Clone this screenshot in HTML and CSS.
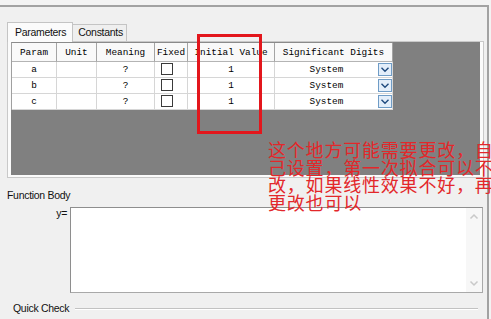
FILE: index.html
```html
<!DOCTYPE html>
<html>
<head>
<meta charset="utf-8">
<link rel="stylesheet" href="styles.css">
</head>
<body>
<div class="frame">
  <div class="tabs">
    <div class="tab active">Parameters</div>
    <div class="tab">Constants</div>
  </div>
  <div class="page">
    <div class="grid">
      <div class="table">
        <div class="cell head">Param</div>
        <div class="cell head">Unit</div>
        <div class="cell head">Meaning</div>
        <div class="cell head">Fixed</div>
        <div class="cell head">Initial Value</div>
        <div class="cell head">Significant Digits</div>

        <div class="cell">a</div>
        <div class="cell"></div>
        <div class="cell">?</div>
        <div class="cell fixed"><span class="check"></span></div>
        <div class="cell">1</div>
        <div class="cell sig"><span class="sig-text">System</span><span class="drop"><svg width="14" height="13" viewBox="0 0 14 13"><polyline points="3.5,4.8 7,8.3 10.5,4.8" fill="none" stroke="#1f4a7e" stroke-width="1.4"/></svg></span></div>

        <div class="cell">b</div>
        <div class="cell"></div>
        <div class="cell">?</div>
        <div class="cell fixed"><span class="check"></span></div>
        <div class="cell">1</div>
        <div class="cell sig"><span class="sig-text">System</span><span class="drop"><svg width="14" height="13" viewBox="0 0 14 13"><polyline points="3.5,4.8 7,8.3 10.5,4.8" fill="none" stroke="#1f4a7e" stroke-width="1.4"/></svg></span></div>

        <div class="cell">c</div>
        <div class="cell"></div>
        <div class="cell">?</div>
        <div class="cell fixed"><span class="check"></span></div>
        <div class="cell">1</div>
        <div class="cell sig"><span class="sig-text">System</span><span class="drop"><svg width="14" height="13" viewBox="0 0 14 13"><polyline points="3.5,4.8 7,8.3 10.5,4.8" fill="none" stroke="#1f4a7e" stroke-width="1.4"/></svg></span></div>
      </div>
    </div>
  </div>

  <div class="label fb">Function Body</div>
  <div class="fn-row">
    <div class="yeq">y=</div>
    <div class="textbox">
      <div class="scroll">
        <svg width="16" height="16" viewBox="0 0 16 16"><polyline points="4.5,9.5 8,6 11.5,9.5" fill="none" stroke="#c9c9c9" stroke-width="1.5"/></svg>
        <svg width="16" height="16" viewBox="0 0 16 16"><polyline points="4.5,6.5 8,10 11.5,6.5" fill="none" stroke="#c9c9c9" stroke-width="1.5"/></svg>
      </div>
    </div>
  </div>
  <div class="qc">
    <span class="label">Quick Check</span>
    <div class="rule"></div>
  </div>
</div>

<div class="mark"></div>
<div class="note">
  <div>这个地方可能需要更改，自</div>
  <div>己设置，第一次拟合可以不</div>
  <div>改，如果线性效果不好，再</div>
  <div>更改也可以</div>
</div>
</body>
</html>
```

FILE: styles.css
```css
html, body {
  margin: 0;
  padding: 0;
}
body {
  width: 491px;
  height: 319px;
  overflow: hidden;
  background: #f3f3f3;
  position: relative;
  font-family: "Liberation Sans", Arial, sans-serif;
  font-size: 10.5px;
  letter-spacing: -0.3px;
  color: #111;
}
.frame {
  box-sizing: border-box;
  margin-top: 5px;
  width: 489px;
  height: 314px;
  border-top: 2px solid #a2a2a2;
  border-right: 2px solid #a2a2a2;
  background: #f0f0f0;
  padding-left: 7px;
}
.tabs {
  display: flex;
  align-items: flex-end;
  margin-top: 15px;
  height: 19px;
}
.tab {
  box-sizing: border-box;
  height: 17px;
  line-height: 15px;
  padding: 0 3px 0 5px;
  border: 1px solid #c4c4c4;
  border-bottom: none;
  border-left: none;
  background: #efefef;
}
.tab.active {
  height: 20px;
  line-height: 18px;
  padding: 0 6px 0 7px;
  margin-bottom: -1px;
  border-left: 1px solid #c4c4c4;
  background: #fbfbfb;
  position: relative;
  z-index: 1;
}
.page {
  box-sizing: border-box;
  width: 477px;
  border: 1px solid #c9c9c9;
  background: #fbfbfb;
  padding: 0 3px 2px 4px;
}
.grid {
  height: 133px;
  background: #808080;
  margin-left: -1px;
}
.table {
  display: grid;
  grid-template-columns: 45px 40px 58px 33px 87px 118px;
  grid-template-rows: 19px 16px 16px 16px;
  width: max-content;
  border-left: 1px solid #a0a0a0;
  border-top: 1px solid #8a8a8a;
  font-family: "Liberation Mono", "Courier New", monospace;
  font-size: 9.4px;
  letter-spacing: 0;
  color: #000;
}
.cell {
  box-sizing: border-box;
  background: #fff;
  border-right: 1px solid #d6d6d6;
  border-bottom: 1px solid #d6d6d6;
  display: flex;
  align-items: center;
  justify-content: center;
}
.cell.head {
  background: #f9f9f9;
  border-right: 1px solid #a4a4a4;
  border-bottom: 1px solid #b4b4b4;
}
.cell.fixed {
  justify-content: flex-start;
  padding-left: 6px;
}
.check {
  box-sizing: border-box;
  width: 12px;
  height: 12px;
  border: 1px solid #3a3a3a;
  background: #fff;
  margin-top: -1px;
}
.cell.sig {
  justify-content: space-between;
  padding-right: 0;
}
.sig-text {
  flex: 1;
  text-align: center;
}
.drop {
  box-sizing: border-box;
  width: 14px;
  height: 13px;
  border: 1px solid #6f9cc6;
  background: #e3eefa;
  display: flex;
}
.drop svg {
  margin: -1px;
}
.label {
  line-height: 13px;
}
.fb {
  margin-top: 11px;
  margin-left: 0;
}
.fn-row {
  display: grid;
  grid-template-columns: 60px 413px;
  column-gap: 3px;
  margin-top: 5px;
}
.yeq {
  text-align: right;
  line-height: 12px;
  font-style: italic;
  font-style: normal;
}
.textbox {
  box-sizing: border-box;
  height: 86px;
  border: 1px solid #8e8e8e;
  border-right-color: #a9a9a9;
  border-bottom-color: #a9a9a9;
  background: #fff;
  display: flex;
  justify-content: flex-end;
}
.scroll {
  width: 16px;
  background: #f7f7f7;
  display: flex;
  flex-direction: column;
  justify-content: space-between;
  padding: 1px 0 1px;
}
.qc {
  display: flex;
  align-items: center;
  margin-top: 9px;
  margin-left: 6px;
  margin-right: 9px;
}
.rule {
  flex: 1;
  margin-left: 6px;
  height: 1px;
  background: #c2c2c2;
  border-bottom: 1px solid #ffffff;
}
.mark {
  position: absolute;
  left: 197px;
  top: 34px;
  width: 65px;
  height: 100px;
  box-sizing: border-box;
  border: 3px solid #e3161c;
}
.note {
  position: absolute;
  left: 268px;
  top: 141px;
  font-family: "Noto Sans CJK SC", "Noto Sans CJK JP", sans-serif;
  font-size: 18px;
  line-height: 17.5px;
  letter-spacing: 0.8px;
  color: #e3272a;
  white-space: nowrap;
}
```
